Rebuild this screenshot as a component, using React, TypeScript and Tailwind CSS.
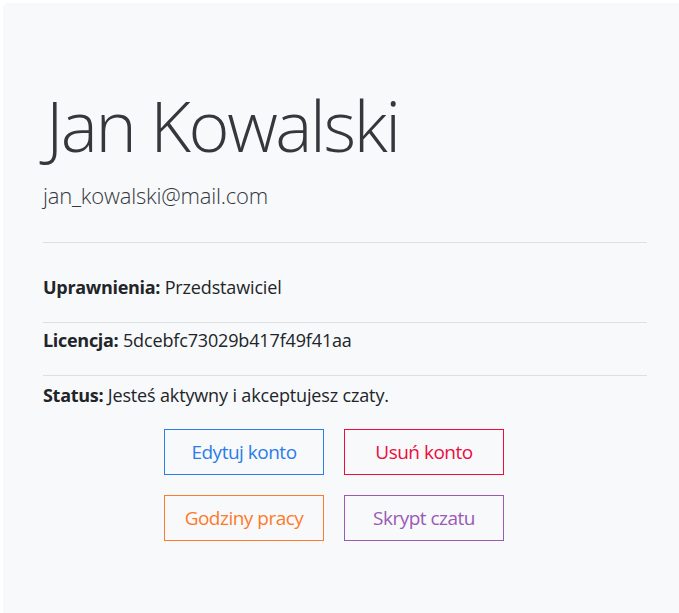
const font = { fontFamily: '"Open Sans", "Noto Sans", sans-serif' };

interface InfoRowProps {
  label: string;
  value: string;
  className: string;
}

function InfoRow({ label, value, className }: InfoRowProps) {
  return (
    <p className={`text-[18px] leading-[27px] tracking-[-0.15px] text-[#212529] ${className}`}>
      <strong className="font-bold tracking-[-0.3px]">{label}</strong> {value}
    </p>
  );
}

interface ActionButtonProps {
  label: string;
  tone: string;
}

function ActionButton({ label, tone }: ActionButtonProps) {
  return (
    <button
      type="button"
      className={`w-[160px] h-[46px] border bg-transparent text-[19px] leading-[30px] tracking-[-0.5px] font-normal flex items-center justify-center ${tone}`}
    >
      {label}
    </button>
  );
}

export default function App() {
  return (
    <div className="min-h-[613px] bg-white pl-[3px] pt-[3px]" style={font}>
      <div className="h-[610px] bg-[#f8f9fa] rounded-tl-[5px] pl-[40px] pr-[32px] pt-[80px]">
        <h1 className="text-[70px] leading-[84px] font-light text-[#34383c] tracking-[-2.4px] pl-[3px]">Jan Kowalski</h1>
        <p className="mt-[12px] text-[22px] leading-[33px] font-light text-[#34383c] tracking-[-0.2px]">
          jan_kowalski@mail.com
        </p>
        <hr className="mt-[30px] border-0 border-t border-[rgba(0,0,0,0.1)]" />
        <InfoRow
          label="Uprawnienia:"
          value="Przedstawiciel"
          className="pt-[31px] pb-[21px] border-b border-[rgba(0,0,0,0.1)]"
        />
        <InfoRow
          label="Licencja:"
          value="5dcebfc73029b417f49f41aa"
          className="pt-[4px] pb-[21px] border-b border-[rgba(0,0,0,0.1)]"
        />
        <InfoRow label="Status:" value="Jesteś aktywny i akceptujesz czaty." className="pt-[6px]" />
        <div className="mt-[20px] ml-[121px] grid grid-cols-[160px_160px] gap-x-[20px] gap-y-[20px]">
          <ActionButton label="Edytuj konto" tone="border-[#2b7de9] text-[#2b7de9]" />
          <ActionButton label="Usuń konto" tone="border-[#ec0c3e] text-[#ec0c3e]" />
          <ActionButton label="Godziny pracy" tone="border-[#fd7b2b] text-[#fd7b2b]" />
          <ActionButton label="Skrypt czatu" tone="border-[#9b59b6] text-[#9b59b6]" />
        </div>
      </div>
    </div>
  );
}
